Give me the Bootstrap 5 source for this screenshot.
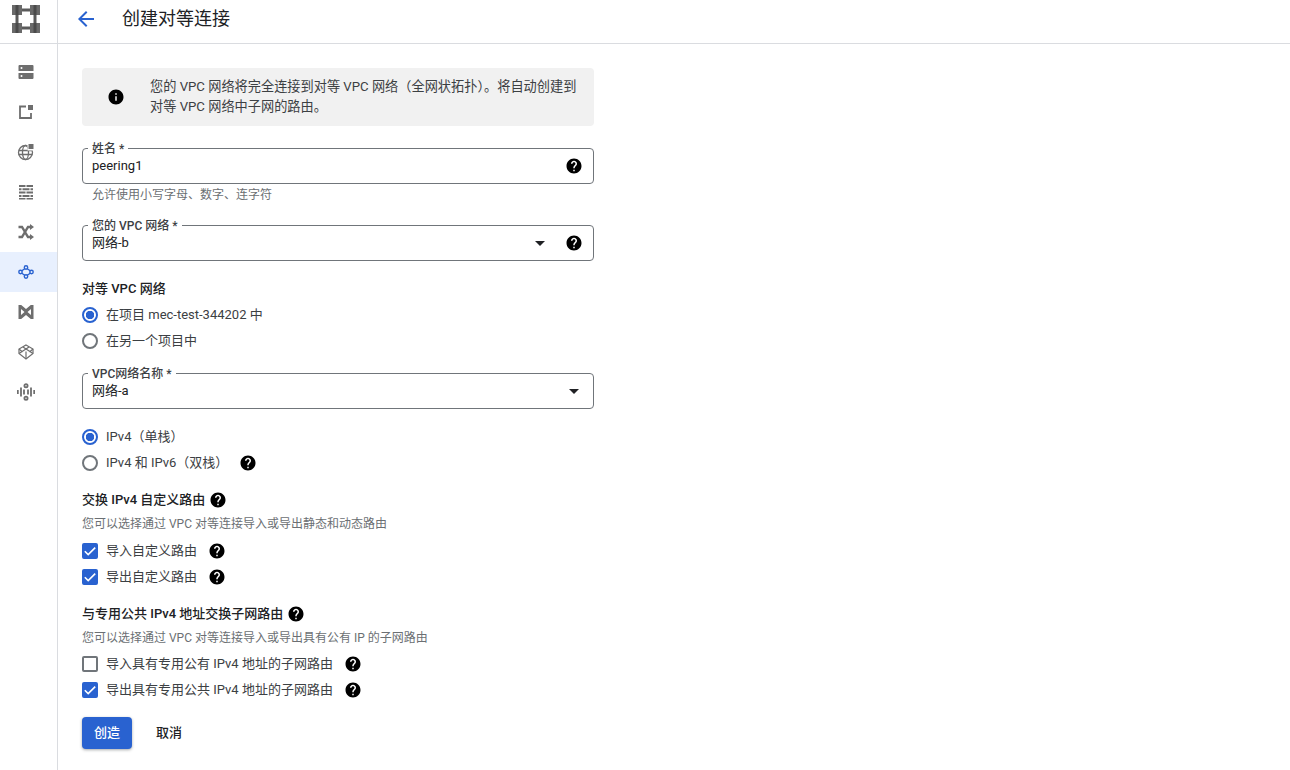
<!DOCTYPE html>
<html lang="zh-CN">
<head>
    <meta charset="UTF-8">
    <meta name="viewport" content="width=device-width, initial-scale=1.0">
    <title>创建对等连接</title>
    <link href="https://cdn.jsdelivr.net/npm/bootstrap@5.3.3/dist/css/bootstrap.min.css" rel="stylesheet">
    <style>
        body {
            font-family: Roboto, "Noto Sans CJK SC", sans-serif;
            font-size: 13px;
            color: #202124;
            height: 770px;
            overflow: hidden;
        }
        .top-bar { height: 44px; border-bottom: 1px solid #dadce0; }
        .logo-cell { width: 58px; border-right: 1px solid #dadce0; padding: 5px 0 0 12px; }
        .title-row { padding-bottom: 5px; }
        .back-arrow { margin-left: 16px; margin-right: 24px; color: #2962d0; }
        .page-title { font-size: 18px; font-weight: 400; margin: 0; color: #202124; }
        .side-rail { width: 58px; border-right: 1px solid #dadce0; padding-top: 8px; height: 726px; }
        .rail-item { height: 40px; width: 57px; padding-left: 17px; color: #6e6e6e; }
        .rail-item.is-active { background: #e8f0fe; color: #2962d0; }
        .form-area { width: 560px; padding: 24px; }
        .info-box { background: #f1f1f1; border-radius: 4px; height: 58px; width: 512px; padding-left: 25px; line-height: 20px; color: #3c4043; }
        .info-text { margin-left: 25px; width: 432px; font-size: 13.2px; }
        .outlined { position: relative; width: 512px; height: 36px; border: 1px solid #70757a; border-radius: 4px; padding: 8px 9px 0; line-height: 17px; }
        .outlined-label { position: absolute; top: -8px; left: 5px; padding: 0 4px; background: #fff; font-size: 12px; line-height: 16px; font-weight: 500; color: #3c4043; }
        .field-end { position: absolute; right: 10px; top: 8px; height: 18px; gap: 20px; }
        .caret-down { width: 0; height: 0; border-left: 5px solid transparent; border-right: 5px solid transparent; border-top: 5px solid #202124; }
        .hint-text { font-size: 12px; line-height: 16px; color: #6b6f73; padding-left: 10px; margin-top: 3px; }
        .sub-text { font-size: 12px; line-height: 16px; color: #6b6f73; margin-top: 7px; }
        .group-title { font-size: 13px; font-weight: 500; line-height: 18px; color: #202124; }
        .pick-row { height: 26px; gap: 8px; color: #3c4043; }
        .pick-row .form-check-input { width: 16px; height: 16px; margin: 0; flex: none; border: 2px solid #70757a; box-shadow: none; }
        .pick-row .form-check-input[type=checkbox] { border-radius: 2px; }
        .pick-row .form-check-input[type=checkbox]:checked {
            background-color: #2962d0;
            border-color: #2962d0;
            background-size: 16px 16px;
            background-image: url("data:image/svg+xml,%3csvg xmlns='http://www.w3.org/2000/svg' viewBox='0 0 16 16'%3e%3cpath fill='none' stroke='%23fff' stroke-width='1.6' d='M2.800 8.200l3.400 3.400 7-7'/%3e%3c/svg%3e");
        }
        .pick-row .form-check-input[type=radio]:checked { background-color: #fff; border-color: #2962d0; background-image: radial-gradient(circle, #2962d0 0, #2962d0 4px, transparent 4.5px); }
        .help-gap { margin-left: 3px; }
        .help-icon { display: block; flex: none; color: #000; }
        .btn-make { background: #2962d0; color: #fff; font-size: 13px; font-weight: 500; width: 50px; height: 32px; padding: 0; border: 0; border-radius: 4px; box-shadow: 0 1px 3px rgba(60,64,67,.45); }
        .btn-make:hover { background: #2962d0; color: #fff; }
        .btn-quit { font-size: 13px; font-weight: 500; width: 50px; height: 32px; padding: 0; border: 0; margin-left: 12px; color: #202124; }
        .gap-name { margin-top: 22px; }
        .gap-network { margin-top: 22px; }
        .gap-peer-name { margin-top: 19px; }
        .gap-peer { margin-top: 19px; }
        .gap-radio { margin-top: 4px; }
        .gap-stack { margin-top: 15px; }
        .gap-group { margin-top: 15px; }
        .gap-check { margin-top: 6px; }
        .gap-check-low { margin-top: 5px; }
        .gap-public { margin-top: 15px; }
        .gap-actions { margin-top: 14px; }
    </style>
</head>
<body>

    <svg width="0" height="0" class="position-absolute">
        <symbol id="ico-help" viewBox="0 0 24 24"><path fill="currentColor" d="M12 2C6.48 2 2 6.48 2 12s4.48 10 10 10 10-4.48 10-10S17.52 2 12 2zm1 17h-2v-2h2v2zm2.07-7.75l-.9.92C13.45 12.9 13 13.5 13 15h-2v-.5c0-1.1.45-2.1 1.17-2.83l1.24-1.26c.37-.36.59-.86.59-1.41 0-1.1-.9-2-2-2s-2 .9-2 2H8c0-2.21 1.79-4 4-4s4 1.79 4 4c0 .88-.36 1.68-.93 2.25z"/></symbol>
    </svg>

    <div class="top-bar d-flex align-items-stretch">
        <div class="logo-cell">
            <svg class="d-block" width="28" height="28" viewBox="0 0 28 28">
                <path fill="#6a6a6a" d="M0 0h10v10H0zM18 0h10v10H18zM0 18h10v10H0zM18 18h10v10H18z"/>
                <path fill="#5a5a5a" d="M10 3.500h8v3h-8zM10 21.500h8v3h-8zM3.500 10h3v8h-3zM21.500 10h3v8h-3z"/>
                <path fill="#4a4a4a" d="M3.500 0h3v10h-3zM21.500 0h3v10h-3zM3.500 18h3v10h-3zM21.500 18h3v10h-3z"/>
            </svg>
        </div>
        <div class="title-row d-flex align-items-center">
            <svg class="back-arrow" width="24" height="24" viewBox="0 0 24 24"><path fill="currentColor" d="M20 11H7.830l5.590-5.590L12 4l-8 8 8 8 1.410-1.410L7.830 13H20v-2z"/></svg>
            <h1 class="page-title">创建对等连接</h1>
        </div>
    </div>

    <div class="d-flex">
        <div class="side-rail flex-shrink-0">
            <div class="rail-item d-flex align-items-center">
                <svg width="18" height="18" viewBox="0 0 18 18"><path fill="currentColor" fill-rule="evenodd" d="M2.500 2h13a1 1 0 0 1 1 1v5h-15V3a1 1 0 0 1 1-1zm2 2a1 1 0 1 0 0 2 1 1 0 0 0 0-2zM1.500 10h15v5a1 1 0 0 1-1 1h-13a1 1 0 0 1-1-1zm3 2a1 1 0 1 0 0 2 1 1 0 0 0 0-2z"/></svg>
            </div>
            <div class="rail-item d-flex align-items-center">
                <svg width="18" height="18" viewBox="0 0 18 18"><path fill="none" stroke="currentColor" stroke-width="1.800" d="M9 3.500H3v11.500h11V10"/><path fill="currentColor" d="M11 2h5v5h-5z"/></svg>
            </div>
            <div class="rail-item d-flex align-items-center">
                <svg width="18" height="18" viewBox="0 0 18 18"><g fill="none" stroke="currentColor" stroke-width="1.300"><circle cx="8.500" cy="9.500" r="7"/><ellipse cx="8.500" cy="9.500" rx="3" ry="7"/><path d="M1.500 7.500h14M1.500 11.500h14"/></g><path fill="#fff" d="M10.500 0H18v7.500h-7.500z"/><path fill="currentColor" d="M11.500 1h5v5h-5z"/></svg>
            </div>
            <div class="rail-item d-flex align-items-center">
                <svg width="18" height="18" viewBox="0 0 18 18"><path fill="currentColor" d="M2 2h6.500v2H2zM9.500 2H16v2H9.500zM2 5.300h2.500v2H2zM5.500 5.300h7v2h-7zM13.500 5.300H16v2h-2.500zM2 8.600h6.500v2H2zM9.500 8.600H16v2H9.500zM2 11.900h2.500v2H2zM5.500 11.900h7v2h-7zM13.500 11.900H16v2h-2.500zM2 15h6.500v1.500H2zM9.500 15H16v1.500H9.500z"/></svg>
            </div>
            <div class="rail-item d-flex align-items-center">
                <svg width="18" height="18" viewBox="0 0 18 18"><path fill="none" stroke="currentColor" stroke-width="2.400" d="M1.500 4H5l6 10h2.500M1.500 14H5l6-10h2.500"/><path fill="currentColor" d="M13 1l4 3-4 3zM13 11l4 3-4 3z"/></svg>
            </div>
            <div class="rail-item is-active d-flex align-items-center">
                <svg width="18" height="18" viewBox="0 0 18 18"><g fill="none" stroke="currentColor" stroke-width="1.400"><path d="M8 5.500L4.500 8M10 5.500L13.500 8M4.500 10L8 12.500M13.500 10L10 12.500"/><circle cx="9" cy="4.500" r="1.700"/><circle cx="3.500" cy="9" r="1.700"/><circle cx="14.500" cy="9" r="1.700"/><circle cx="9" cy="13.500" r="1.700"/></g></svg>
            </div>
            <div class="rail-item d-flex align-items-center">
                <svg width="18" height="18" viewBox="0 0 18 18"><path fill="currentColor" fill-rule="evenodd" d="M1.500 2h2.700L9 6l4.800-4h2.700v14h-2.700L9 12l-4.800 4H1.500zM4 6v6l3.500-3zM14 6l-3.500 3 3.500 3z"/></svg>
            </div>
            <div class="rail-item d-flex align-items-center">
                <svg width="18" height="18" viewBox="0 0 18 18"><g fill="none" stroke="currentColor" stroke-width="1.200"><path d="M9 2l7 4v4.500L9 16l-7-5.500V6z"/><path d="M2 6l3.500 3M16 6l-3.500 3M2 10.500L9 6l7 4.500M6 4l3 2 3-2M9 8.500V16"/></g></svg>
            </div>
            <div class="rail-item d-flex align-items-center">
                <svg width="18" height="18" viewBox="0 0 18 18"><g fill="none" stroke="currentColor" stroke-width="1.800"><path d="M.8 7v4M4 4.500v9M14 4.500v9M17.200 7v4M7 6.500v5M11 6.500v5"/><circle cx="9" cy="2.800" r="1.600"/><circle cx="9" cy="15.200" r="1.600"/></g></svg>
            </div>
        </div>

        <form class="form-area">
            <div class="info-box d-flex align-items-center">
                <svg width="18" height="18" viewBox="0 0 24 24" class="flex-shrink-0"><path fill="#000" d="M12 2C6.480 2 2 6.480 2 12s4.480 10 10 10 10-4.480 10-10S17.520 2 12 2zm1 15h-2v-6h2v6zm0-8h-2V7h2v2z"/></svg>
                <div class="info-text">您的 VPC 网络将完全连接到对等 VPC 网络（全网状拓扑）。将自动创建到对等 VPC 网络中子网的路由。</div>
            </div>

            <div class="outlined gap-name">
                <span class="outlined-label">姓名 *</span>
                peering1
                <div class="field-end d-flex align-items-center">
                    <svg class="help-icon" width="18" height="18"><use href="#ico-help"/></svg>
                </div>
            </div>
            <div class="hint-text">允许使用小写字母、数字、连字符</div>

            <div class="outlined gap-network">
                <span class="outlined-label">您的 VPC 网络 *</span>
                网络-b
                <div class="field-end d-flex align-items-center">
                    <span class="caret-down"></span>
                    <svg class="help-icon" width="18" height="18"><use href="#ico-help"/></svg>
                </div>
            </div>

            <div class="group-title gap-peer">对等 VPC 网络</div>
            <label class="pick-row d-flex align-items-center gap-radio">
                <input class="form-check-input" type="radio" name="peer" checked>
                在项目 mec-test-344202 中
            </label>
            <label class="pick-row d-flex align-items-center">
                <input class="form-check-input" type="radio" name="peer">
                在另一个项目中
            </label>

            <div class="outlined gap-peer-name">
                <span class="outlined-label">VPC网络名称 *</span>
                网络-a
                <div class="field-end d-flex align-items-center">
                    <span class="caret-down me-1"></span>
                </div>
            </div>

            <label class="pick-row d-flex align-items-center gap-stack">
                <input class="form-check-input" type="radio" name="stack" checked>
                IPv4（单栈）
            </label>
            <label class="pick-row d-flex align-items-center">
                <input class="form-check-input" type="radio" name="stack">
                IPv4 和 IPv6（双栈）
                <svg class="help-icon help-gap" width="18" height="18"><use href="#ico-help"/></svg>
            </label>

            <div class="group-title d-flex align-items-center gap-1 gap-group">
                交换 IPv4 自定义路由
                <svg class="help-icon" width="18" height="18"><use href="#ico-help"/></svg>
            </div>
            <div class="sub-text">您可以选择通过 VPC 对等连接导入或导出静态和动态路由</div>
            <label class="pick-row d-flex align-items-center gap-check">
                <input class="form-check-input" type="checkbox" checked>
                导入自定义路由
                <svg class="help-icon help-gap" width="18" height="18"><use href="#ico-help"/></svg>
            </label>
            <label class="pick-row d-flex align-items-center">
                <input class="form-check-input" type="checkbox" checked>
                导出自定义路由
                <svg class="help-icon help-gap" width="18" height="18"><use href="#ico-help"/></svg>
            </label>

            <div class="group-title d-flex align-items-center gap-1 gap-public">
                与专用公共 IPv4 地址交换子网路由
                <svg class="help-icon" width="18" height="18"><use href="#ico-help"/></svg>
            </div>
            <div class="sub-text">您可以选择通过 VPC 对等连接导入或导出具有公有 IP 的子网路由</div>
            <label class="pick-row d-flex align-items-center gap-check-low">
                <input class="form-check-input" type="checkbox">
                导入具有专用公有 IPv4 地址的子网路由
                <svg class="help-icon help-gap" width="18" height="18"><use href="#ico-help"/></svg>
            </label>
            <label class="pick-row d-flex align-items-center">
                <input class="form-check-input" type="checkbox" checked>
                导出具有专用公共 IPv4 地址的子网路由
                <svg class="help-icon help-gap" width="18" height="18"><use href="#ico-help"/></svg>
            </label>

            <div class="d-flex gap-actions">
                <button type="button" class="btn btn-make">创造</button>
                <button type="button" class="btn btn-quit">取消</button>
            </div>
        </form>
    </div>

    <script src="https://cdn.jsdelivr.net/npm/bootstrap@5.3.3/dist/js/bootstrap.bundle.min.js"></script>
</body>
</html>
